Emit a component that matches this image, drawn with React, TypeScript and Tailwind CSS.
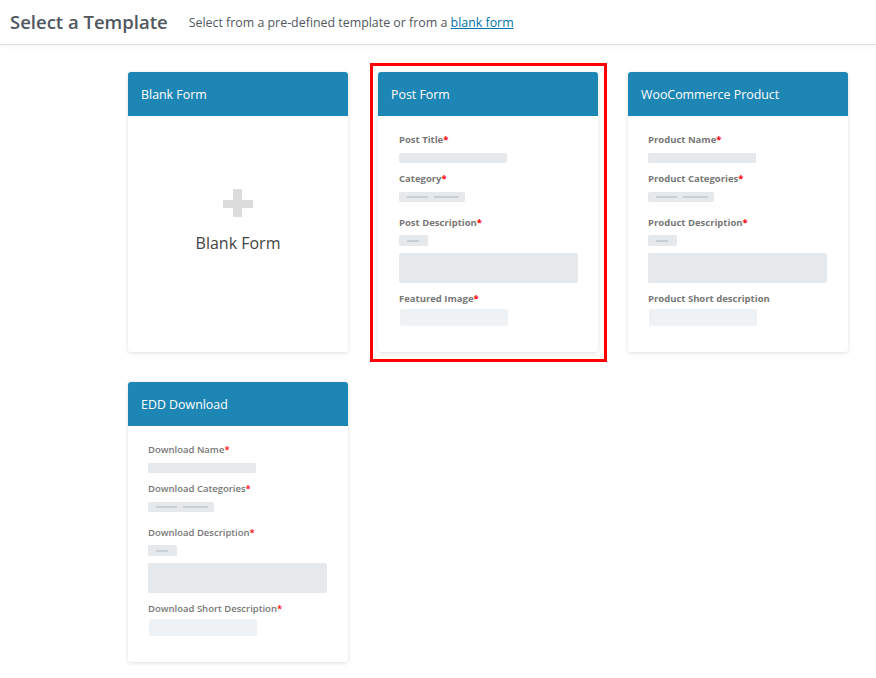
import React from 'react'

type FieldType = 'text' | 'select' | 'textarea' | 'image'

type Field = {
  label: string
  required?: boolean
  type: FieldType
}

type Template = {
  title: string
  fields: Field[]
  selected?: boolean
  labelWeight?: string
}

const templates: Template[] = [
  {
    title: 'Post Form',
    selected: true,
    fields: [
      { label: 'Post Title', required: true, type: 'text' },
      { label: 'Category', required: true, type: 'select' },
      { label: 'Post Description', required: true, type: 'textarea' },
      { label: 'Featured Image', required: true, type: 'image' },
    ],
  },
  {
    title: 'WooCommerce Product',
    fields: [
      { label: 'Product Name', required: true, type: 'text' },
      { label: 'Product Categories', required: true, type: 'select' },
      { label: 'Product Description', required: true, type: 'textarea' },
      { label: 'Product Short description', type: 'image' },
    ],
  },
  {
    title: 'EDD Download',
    labelWeight: 'font-semibold',
    fields: [
      { label: 'Download Name', required: true, type: 'text' },
      { label: 'Download Categories', required: true, type: 'select' },
      { label: 'Download Description', required: true, type: 'textarea' },
      { label: 'Download Short Description', required: true, type: 'image' },
    ],
  },
]

function FieldPreview({ field, weight }: { field: Field; weight: string }) {
  return (
    <div className="flex flex-col">
      <div className={`text-[9.5px] leading-[14px] text-[#777] ${weight}`}>
        {field.label}
        {field.required && <span className="text-[#f00]">*</span>}
      </div>

      {field.type === 'text' && <div className="mt-[6px] h-[10px] w-[108px] rounded-[2px] bg-[#e5e9ec]" />}

      {field.type === 'select' && (
        <div className="mt-[6px] flex h-[10px] w-[66px] items-center gap-[6px] rounded-[2px] bg-[#e5e9ec] pl-[8px]">
          <span className="h-[2px] w-[21px] bg-[#c9d0d5]" />
          <span className="h-[2px] w-[25px] bg-[#c9d0d5]" />
        </div>
      )}

      {field.type === 'textarea' && (
        <>
          <div className="mt-[5px] flex h-[11px] w-[29px] items-center rounded-[2px] bg-[#e5e9ec] pl-[8px]">
            <span className="h-[2px] w-[12px] bg-[#c9d0d5]" />
          </div>
          <div className="mt-[7px] h-[30px] w-[179px] rounded-[2px] bg-[#e5e9ec]" />
        </>
      )}

      {field.type === 'image' && <div className="ml-[1px] mt-[3px] h-[17px] w-[108px] rounded-[2px] bg-[#eff2f4]" />}
    </div>
  )
}

function CardHeader({ title }: { title: string }) {
  return (
    <div className="flex h-[44px] items-center rounded-t-[3px] bg-[#1e86b5] px-[13px] pt-[2px] text-[12.4px] text-white">
      {title}
    </div>
  )
}

function TemplateCard({ template }: { template: Template }) {
  const weight = template.labelWeight ?? 'font-bold'
  const gaps = ['mt-0', 'mt-[9px]', 'mt-[14px]', 'mt-[9px]']
  return (
    <div className="relative">
      {template.selected && (
        <div className="pointer-events-none absolute -bottom-[10px] -left-[8px] -right-[9px] -top-[9px] border-[3px] border-[#f00]" />
      )}
      <div className="h-[280px] rounded-[3px] bg-white shadow-[0_1px_4px_rgba(0,0,0,0.13)]">
        <CardHeader title={template.title} />
        <div className={`${template.selected ? 'px-[21px]' : 'px-[20px]'} pt-[17px]`}>
          {template.fields.map((f, i) => (
            <div key={f.label} className={gaps[i]}>
              <FieldPreview field={f} weight={weight} />
            </div>
          ))}
        </div>
      </div>
    </div>
  )
}

function BlankCard() {
  return (
    <div className="flex h-[280px] flex-col rounded-[3px] bg-white shadow-[0_1px_4px_rgba(0,0,0,0.13)]">
      <CardHeader title="Blank Form" />
      <div className="flex flex-1 flex-col items-center pt-[73px]">
        <div className="relative h-[28px] w-[30px]">
          <div className="absolute left-0 top-[11px] h-[8px] w-[30px] bg-[#dcdcdc]" />
          <div className="absolute left-[10px] top-0 h-[28px] w-[9px] bg-[#dcdcdc]" />
        </div>
        <div className="mt-[16px] text-[16px] leading-[20px] text-[#444]">Blank Form</div>
      </div>
    </div>
  )
}

export default function App() {
  return (
    <div className="min-h-[678px] w-full bg-white" style={{ fontFamily: '"Open Sans", "Noto Sans", sans-serif' }}>
      <header className="flex h-[45px] items-center border-b border-[#dcdcde] px-[10px] shadow-[0_2px_4px_rgba(0,0,0,0.04)]">
        <h1 className="text-[18.5px] font-semibold text-[#50575e]">Select a Template</h1>
        <p className="ml-[21px] mt-[2px] text-[12.4px] text-[#50575e]">
          Select from a pre-defined template or from a{' '}
          <a href="#" className="text-[#0073aa] underline">
            blank form
          </a>
        </p>
      </header>

      <main className="grid grid-cols-[220px_220px_220px] gap-[30px] pl-[128px] pt-[27px]">
        <BlankCard />
        {templates.map((t) => (
          <TemplateCard key={t.title} template={t} />
        ))}
      </main>
    </div>
  )
}
